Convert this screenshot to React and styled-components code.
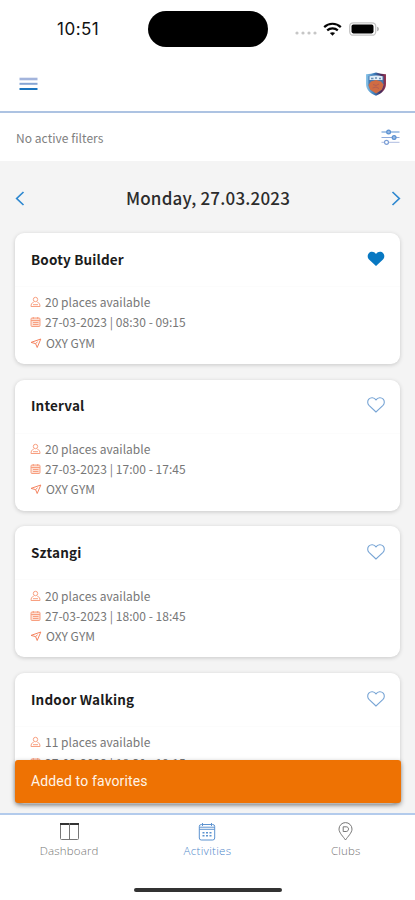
import React from "react";
import styled, { createGlobalStyle } from "styled-components";

const Global = createGlobalStyle`
  * { box-sizing: border-box; }
  body { margin: 0; background: #fff; }
  button { border: 0; padding: 0; background: none; font: inherit; color: inherit; }
  svg { display: block; flex: none; }
`;

const sans = `"Noto Sans CJK SC", "Noto Sans", sans-serif`;

const Screen = styled.div`
  width: 415px;
  height: 900px;
  display: flex;
  flex-direction: column;
  overflow: hidden;
  position: relative;
  background: #fff;
  font-family: ${sans};
`;

const StatusBar = styled.div`
  height: 58px;
  flex: none;
  display: grid;
  grid-template-columns: 148px 120px 1fr;
  align-items: center;
`;

const Clock = styled.div`
  padding-left: 57px;
  font: 400 17px/20px Inter, sans-serif;
  letter-spacing: 0.5px;
  color: #111;
`;

const Island = styled.div`
  height: 36px;
  border-radius: 18px;
  background: #000;
`;

const StatusIcons = styled.div`
  display: flex;
  align-items: center;
  padding: 0 0 1px 27px;
`;

const SignalSlot = styled.div`
  padding-top: 9px;
`;

const WifiSlot = styled.div`
  padding: 0 7px 0 6px;
`;

const Header = styled.header`
  height: 55px;
  flex: none;
  display: flex;
  align-items: center;
  justify-content: space-between;
  padding: 0 28px 2px 19px;
  border-bottom: 2px solid #adc3e2;
`;

const FilterBar = styled.div`
  height: 48px;
  flex: none;
  display: flex;
  align-items: center;
  justify-content: space-between;
  padding: 1px 15px 0 16px;
`;

const FilterText = styled.span`
  font-size: 12px;
  line-height: 20px;
  letter-spacing: 0.05px;
  color: #808080;
`;

const Content = styled.main`
  height: 652px;
  flex: none;
  overflow: hidden;
  background: #f4f4f4;
`;

const DateNav = styled.div`
  height: 72px;
  display: flex;
  align-items: center;
  justify-content: space-between;
  padding: 2px 14px 0 15px;
`;

const DateTitle = styled.h1`
  margin: 0;
  padding-bottom: 1px;
  font-size: 17px;
  font-weight: 500;
  line-height: 26px;
  letter-spacing: 0.2px;
  color: #2c2c2c;
`;

const CardList = styled.div`
  display: flex;
  flex-direction: column;
  gap: 15.7px;
  padding: 0 15px;
`;

const Card = styled.article`
  height: 131px;
  flex: none;
  border-radius: 9px;
  background: #fff;
  box-shadow: 0 1px 4px rgba(0, 0, 0, 0.18);
`;

const CardHead = styled.div`
  height: 54px;
  display: flex;
  align-items: center;
  justify-content: space-between;
  padding: 0 15px 2px 16px;
  border-bottom: 1px solid #fcfcfc;
`;

const CardTitle = styled.h2`
  margin: 0;
  font-size: 13.5px;
  font-weight: 700;
  line-height: 20px;
  letter-spacing: 0.16px;
  color: #1c1c1c;
`;

const Details = styled.div`
  padding: 5px 15px;
`;

const Detail = styled.div`
  height: 20.3px;
  display: flex;
  align-items: center;
  gap: 4px;
  font-size: 12px;
  line-height: 20px;
  letter-spacing: ${(p) => p.$spacing}px;
  color: #777;
`;

const Toast = styled.div`
  position: absolute;
  left: 15px;
  top: 760px;
  width: 386px;
  height: 43px;
  display: flex;
  align-items: center;
  padding: 0 16px 1px;
  border-radius: 3px;
  background: #ee7203;
  box-shadow: 0 2px 5px rgba(0, 0, 0, 0.4);
  font: 400 14px/20px Roboto, sans-serif;
  letter-spacing: 0.15px;
  color: #fff4e8;
`;

const TabBar = styled.nav`
  height: 87px;
  flex: none;
  display: flex;
  flex-direction: column;
  align-items: center;
  border-top: 2px solid #b3cbec;
`;

const Tabs = styled.div`
  width: 100%;
  display: grid;
  grid-template-columns: repeat(3, 1fr);
  padding-top: 7px;
`;

const Tab = styled.button`
  display: flex;
  flex-direction: column;
  align-items: center;
  gap: 1px;
  color: ${(p) => (p.$active ? "#4f88ca" : "#777")};
  font: 300 11.5px/18px "Open Sans", "Noto Sans", sans-serif;
  letter-spacing: ${(p) => (p.$active ? 0.3 : 0.15)}px;
`;

const HomeBar = styled.div`
  width: 148px;
  height: 4px;
  margin-top: 28px;
  border-radius: 2px;
  background: #333;
`;

const Signal = () => (
  <svg width="22" height="4" viewBox="0 0 22 4" fill="#c6c6c6">
    <circle cx="2" cy="2" r="1.6" /><circle cx="8" cy="2" r="1.6" />
    <circle cx="14" cy="2" r="1.6" /><circle cx="20" cy="2" r="1.6" />
  </svg>
);

const Wifi = () => (
  <svg width="19" height="14" viewBox="0 0 19 14" fill="none" stroke="#050505" strokeWidth="2.2">
    <path d="M1.2 5.1C5.8.6 13.2.6 17.8 5.1M4.2 8.4c3-2.8 7.6-2.8 10.6 0" />
    <path d="M6.9 11.1c1.5-1.3 3.7-1.3 5.2 0l-2.6 2.6z" fill="#050505" stroke="none" />
  </svg>
);

const Battery = () => (
  <svg width="31" height="14" viewBox="0 0 31 14">
    <rect x=".7" y=".8" width="26" height="12.4" rx="3.5" fill="#fff" stroke="#c4c4c4" strokeWidth="1.3" />
    <rect x="2.5" y="2.6" width="22" height="8.8" rx="1.8" fill="#000" />
    <path d="M28 4.8v4.4c1.3-.2 2-1.2 2-2.2s-.7-2-2-2.2" fill="#bbb" />
  </svg>
);

const Menu = () => (
  <svg width="19" height="14" viewBox="0 0 19 14">
    <path d="M.5 2h18" stroke="#a3b4dc" strokeWidth="2.6" />
    <path d="M.5 6.8h18" stroke="#86a5d4" strokeWidth="2" />
    <path d="M.5 12h18" stroke="#1b75bf" strokeWidth="2" />
  </svg>
);

const Crest = () => (
  <svg width="22" height="24" viewBox="0 0 22 24">
    <defs>
      <linearGradient id="rim" x1="0" x2="1">
        <stop offset="0" stopColor="#8cc6ea" /><stop offset=".45" stopColor="#3476b5" />
        <stop offset=".75" stopColor="#4b2858" /><stop offset="1" stopColor="#9b3851" />
      </linearGradient>
    </defs>
    <path d="M1 2.200Q6 2 11 .5q5 1.500 10 1.700v9.500c0 6-4 9.500-10 12-6-2.500-10-6-10-12z" fill="url(#rim)" />
    <path d="M3.500 4.200q7.500-1.700 15 0v8c0 4-3 6.700-7.500 9-4.500-2.300-7.500-5-7.500-9z" fill="#4778ae" />
    <path d="M4.500 4.200q6.500-1.500 13 0V8h-13z" fill="#e2edf6" />
    <path d="M6 6.600h2.500M10 6h2M14 6.600h2" stroke="#6c91b5" strokeWidth="1.500" />
    <path d="M3.500 13l2.500-3.500 5-1.500 5 1.500 2.500 3-1.500 5-6 4-6-4z" fill="#d06c43" />
    <path d="M8 12.500l3 1 3-1.500M7.500 16l3.500-1 3 1.500" fill="none" stroke="#b55d50" />
  </svg>
);

const Sliders = () => (
  <svg width="19" height="17" viewBox="0 0 19 17" fill="none" stroke="#5b91d1" strokeWidth="1.2">
    <path d="M.5 3h5.200M9.500 3h9" />
    <circle cx="7.600" cy="3" r="1.900" fill="#9bbbe4" />
    <path d="M.5 8.500h10.700M15 8.500h3.500" stroke="#8fabdc" />
    <circle cx="13.100" cy="8.500" r="1.900" fill="#9bbbe4" />
    <path d="M.5 13.300h3M7.500 13.300h11" stroke="#bec9e6" />
    <circle cx="5.500" cy="13.300" r="2" stroke="#7c9fd6" />
  </svg>
);

const Chevron = ({ right }) => (
  <svg width="10" height="15" viewBox="0 0 10 15" fill="none" stroke="#2e88d0" strokeWidth="1.7">
    <path d={right ? "M1.500 1l6.800 6.500L1.500 14" : "M8.500 1L1.700 7.500l6.800 6.500"} />
  </svg>
);

const Heart = ({ filled }) => (
  <svg width="18" height="16" viewBox="0 0 18 16">
    <path
      d="M9 15L2 8.400C.3 6.700.3 3.800 1.800 2.200 3.800.1 7.100.4 9 2.900c1.900-2.500 5.200-2.800 7.200-.7 1.500 1.600 1.500 4.500-.2 6.200z"
      fill={filled ? "#0878c2" : "none"}
      stroke={filled ? "none" : "#78a5d5"}
      strokeWidth="1.1"
    />
  </svg>
);

const PersonIcon = () => (
  <svg width="11" height="12" viewBox="0 0 11 12" fill="none" stroke="#f8a081">
    <circle cx="5.500" cy="3.500" r="2.200" />
    <path d="M3.700 6.200C1.700 6.700 1 8.400 1 10.500h9c0-2.100-.7-3.800-2.700-4.300M3 8.700h5" />
  </svg>
);

const DateIcon = () => (
  <svg width="11" height="12" viewBox="0 0 11 12" fill="none" stroke="#f8a081">
    <rect x="1" y="2" width="9" height="8.500" rx="1" fill="#fde0d5" />
    <path d="M1 4.500h9M3.300 1v2M7.700 1v2M3 6.500h5.500M3 8.500h5.500" />
  </svg>
);

const PlaceIcon = () => (
  <svg width="12" height="12" viewBox="0 0 12 12" fill="none" stroke="#f5835f">
    <path d="M1 5.400L10.800 2 7.200 10.500 5.600 6.600z" /><path d="M5.600 6.600l2-1.800" />
  </svg>
);

const DashboardIcon = () => (
  <svg width="21" height="19" viewBox="0 0 21 19" fill="none" stroke="#777">
    <rect x="1.500" y="1.500" width="18" height="16" rx="1" /><path d="M10.500 2v15.500" />
    <path d="M1 2h9M11 2h9" stroke="#333" strokeWidth="1.8" />
  </svg>
);

const ActivitiesIcon = () => (
  <svg width="18" height="19" viewBox="0 0 18 19" fill="none" stroke="#5d93d0">
    <rect x="1.300" y="2.500" width="15.400" height="15.500" rx="2" />
    <path d="M1.300 5.200h15.400M1.300 7.300h15.400M4.500 1v3M13.500 1v3" />
    <path d="M4.500 10.800h2m1.500 0h2m1.500 0h2M4.500 13.800h2m1.500 0h2m1.500 0h2" strokeWidth="1.4" />
  </svg>
);

const PinIcon = () => (
  <svg width="15" height="19" viewBox="0 0 15 19" fill="none" stroke="#777">
    <path d="M7.500 18C5.400 14.800 1 10.800 1 7.100a6.500 6.500 0 0 1 13 0c0 3.700-4.400 7.700-6.500 10.900z" />
    <path d="M5.200 4.800h3c1.500 0 2.300 1 2.300 2.200S9.700 9.500 8.200 9.500h-3z" />
  </svg>
);

const activities = [
  { name: "Booty Builder", places: 20, time: "08:30 - 09:15", favorite: true },
  { name: "Interval", places: 20, time: "17:00 - 17:45" },
  { name: "Sztangi", places: 20, time: "18:00 - 18:45" },
  { name: "Indoor Walking", places: 11, time: "18:30 - 19:15" },
];

function ActivityCard({ name, places, time, favorite }) {
  return (
    <Card>
      <CardHead>
        <CardTitle>{name}</CardTitle>
        <button aria-label="Favorite"><Heart filled={favorite} /></button>
      </CardHead>
      <Details>
        <Detail $spacing={0.03}><PersonIcon />{places} places available</Detail>
        <Detail $spacing={0.04}><DateIcon />27-03-2023 | {time}</Detail>
        <Detail $spacing={0}><PlaceIcon />OXY GYM</Detail>
      </Details>
    </Card>
  );
}

export default function App() {
  return (
    <Screen>
      <Global />
      <StatusBar>
        <Clock>10:51</Clock>
        <Island />
        <StatusIcons>
          <SignalSlot><Signal /></SignalSlot>
          <WifiSlot><Wifi /></WifiSlot>
          <Battery />
        </StatusIcons>
      </StatusBar>
      <Header>
        <button aria-label="Menu"><Menu /></button>
        <Crest />
      </Header>
      <FilterBar>
        <FilterText>No active filters</FilterText>
        <button aria-label="Filters"><Sliders /></button>
      </FilterBar>
      <Content>
        <DateNav>
          <button aria-label="Previous day"><Chevron /></button>
          <DateTitle>Monday, 27.03.2023</DateTitle>
          <button aria-label="Next day"><Chevron right /></button>
        </DateNav>
        <CardList>
          {activities.map((a) => <ActivityCard key={a.name} {...a} />)}
        </CardList>
      </Content>
      <TabBar>
        <Tabs>
          <Tab><DashboardIcon />Dashboard</Tab>
          <Tab $active><ActivitiesIcon />Activities</Tab>
          <Tab><PinIcon />Clubs</Tab>
        </Tabs>
        <HomeBar />
      </TabBar>
      <Toast role="status">Added to favorites</Toast>
    </Screen>
  );
}
